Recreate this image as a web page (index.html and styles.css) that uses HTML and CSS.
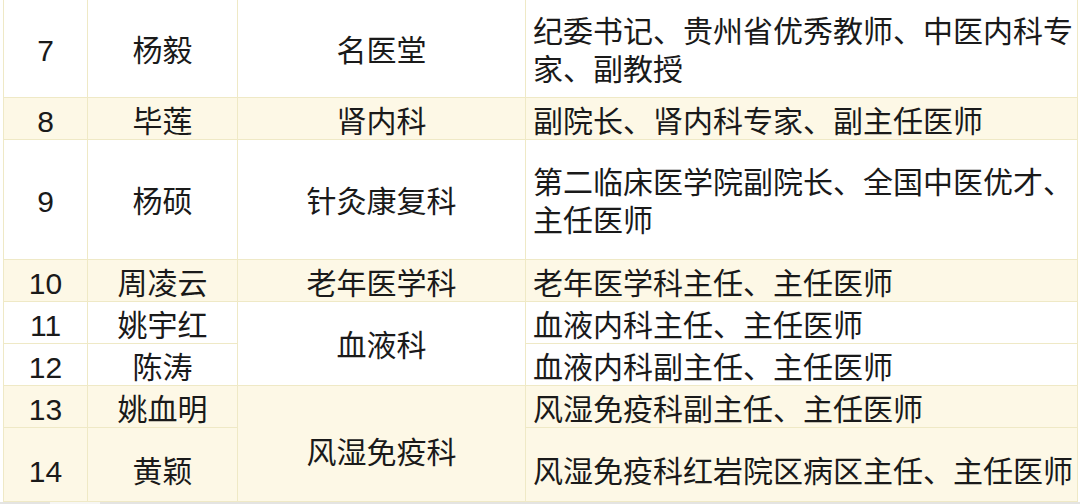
FILE: index.html
```html
<!DOCTYPE html>
<html lang="zh">
<head>
<meta charset="utf-8">
<link rel="stylesheet" href="styles.css">
</head>
<body>
<div class="page">
<table class="grid">
  <colgroup>
    <col class="c1"><col class="c2"><col class="c3"><col class="c4">
  </colgroup>
  <tr class="r7 first">
    <td class="num">7</td><td class="ctr">杨毅</td><td class="ctr">名医堂</td>
    <td class="desc">纪委书记、贵州省优秀教师、中医内科专家、副教授</td>
  </tr>
  <tr class="r-short tint">
    <td class="num">8</td><td class="ctr">毕莲</td><td class="ctr">肾内科</td>
    <td class="desc">副院长、肾内科专家、副主任医师</td>
  </tr>
  <tr class="r9">
    <td class="num">9</td><td class="ctr">杨硕</td><td class="ctr">针灸康复科</td>
    <td class="desc">第二临床医学院副院长、全国中医优才、主任医师</td>
  </tr>
  <tr class="r-short tint">
    <td class="num">10</td><td class="ctr">周凌云</td><td class="ctr">老年医学科</td>
    <td class="desc">老年医学科主任、主任医师</td>
  </tr>
  <tr class="r-short">
    <td class="num">11</td><td class="ctr">姚宇红</td><td class="ctr merged" rowspan="2">血液科</td>
    <td class="desc">血液内科主任、主任医师</td>
  </tr>
  <tr class="r-short">
    <td class="num">12</td><td class="ctr">陈涛</td>
    <td class="desc">血液内科副主任、主任医师</td>
  </tr>
  <tr class="r-short tint">
    <td class="num">13</td><td class="ctr">姚血明</td><td class="ctr merged low" rowspan="2">风湿免疫科</td>
    <td class="desc">风湿免疫科副主任、主任医师</td>
  </tr>
  <tr class="r14 tint">
    <td class="num">14</td><td class="ctr">黄颖</td>
    <td class="desc">风湿免疫科红岩院区病区主任、主任医师</td>
  </tr>
</table>
<div class="foot"><span class="seg a"></span><span class="seg b"></span><span class="seg c"></span></div>
</div>
</body>
</html>
```

FILE: styles.css
```css
html, body {
  margin: 0;
  padding: 0;
  background: #ffffff;
}
.page {
  width: 1080px;
  height: 504px;
  overflow: hidden;
}
.grid {
  margin-left: 3px;
  width: 1074px;
  table-layout: fixed;
  border-collapse: collapse;
  font-family: "Liberation Sans", "Noto Sans CJK SC", sans-serif;
  font-size: 30px;
  color: #1a1a1a;
  line-height: 38px;
}
.c1 { width: 84px; }
.c2 { width: 150px; }
.c3 { width: 288px; }
.c4 { width: 552px; }
.grid td {
  border: 1px solid #efe9c6;
  padding: 0;
  vertical-align: middle;
}
.grid .first td { border-top: none; }
.tint td { background: #fdf8e6; }
.num, .ctr { text-align: center; }
.desc {
  text-align: left;
  padding-left: 7px !important;
  padding-right: 1px !important;
}
.r7 td { height: 92px; padding-top: 5px; }
.r-short td { height: 35px; padding-top: 6px; line-height: 32px; }
.r9 td { height: 115px; padding-top: 4px; }
.r14 td { height: 58px; padding-top: 15px; }
.grid .merged { line-height: 38px; padding-top: 5px; }
.grid .merged.low { padding-top: 19px; }
.foot {
  display: flex;
  height: 4px;
  background: #e6e6e4;
}
.seg { display: block; height: 4px; }
.seg.a { width: 50px; background: #e4e4e2; }
.seg.b { width: 50px; background: #f6f6f4; }
.seg.c { flex: 1; background: #e4e4e2; }
```
